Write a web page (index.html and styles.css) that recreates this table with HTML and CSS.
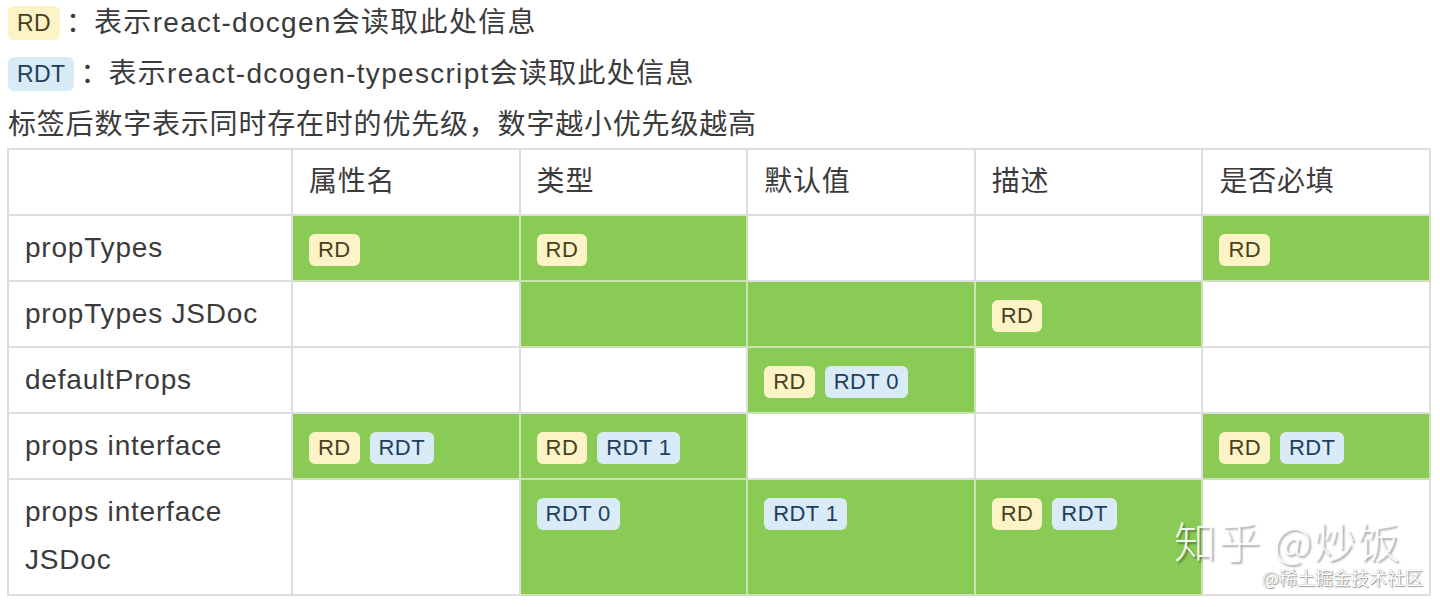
FILE: index.html
```html
<!DOCTYPE html>
<html lang="zh">
<head>
<meta charset="utf-8">
<link rel="stylesheet" href="styles.css">
</head>
<body>
<div class="page">
  <div class="legend">
    <div class="legend-line wide"><span class="badge rd big">RD</span><span class="colon">：</span>表示react-docgen会读取此处信息</div>
    <div class="legend-line wide"><span class="badge rdt big">RDT</span><span class="colon">：</span>表示react-dcogen-typescript会读取此处信息</div>
    <div class="legend-line">标签后数字表示同时存在时的优先级，数字越小优先级越高</div>
  </div>
  <div class="table-wrap">
    <table class="grid">
      <colgroup>
        <col class="c0"><col class="c"><col class="c"><col class="c"><col class="c"><col class="c">
      </colgroup>
      <thead>
        <tr><th></th><th>属性名</th><th>类型</th><th>默认值</th><th>描述</th><th>是否必填</th></tr>
      </thead>
      <tbody>
        <tr>
          <td>propTypes</td>
          <td class="on"><span class="badge rd">RD</span></td>
          <td class="on"><span class="badge rd">RD</span></td>
          <td></td>
          <td></td>
          <td class="on"><span class="badge rd">RD</span></td>
        </tr>
        <tr>
          <td>propTypes JSDoc</td>
          <td></td>
          <td class="on"></td>
          <td class="on"></td>
          <td class="on"><span class="badge rd">RD</span></td>
          <td></td>
        </tr>
        <tr>
          <td>defaultProps</td>
          <td></td>
          <td></td>
          <td class="on"><span class="badge rd">RD</span><span class="badge rdt">RDT 0</span></td>
          <td></td>
          <td></td>
        </tr>
        <tr>
          <td>props interface</td>
          <td class="on"><span class="badge rd">RD</span><span class="badge rdt">RDT</span></td>
          <td class="on"><span class="badge rd">RD</span><span class="badge rdt">RDT 1</span></td>
          <td></td>
          <td></td>
          <td class="on"><span class="badge rd">RD</span><span class="badge rdt">RDT</span></td>
        </tr>
        <tr class="tall">
          <td>props interface<br>JSDoc</td>
          <td></td>
          <td class="on"><span class="badge rdt">RDT 0</span></td>
          <td class="on"><span class="badge rdt">RDT 1</span></td>
          <td class="on"><span class="badge rd">RD</span><span class="badge rdt">RDT</span></td>
          <td></td>
        </tr>
      </tbody>
    </table>
    <div class="watermark">
      <div class="wm-main">知乎 @炒饭</div>
      <div class="wm-sub">@稀土掘金技术社区</div>
    </div>
  </div>
</div>
</body>
</html>
```

FILE: styles.css
```css
html, body {
  margin: 0;
  padding: 0;
  background: #ffffff;
}

body {
  width: 1440px;
  height: 607px;
  overflow: hidden;
  font-family: "Liberation Sans", "Noto Sans CJK SC", sans-serif;
  color: #3b3b3b;
}

.page {
  padding-left: 7px;
}

.legend {
  margin-top: -3px;
  padding-left: 1px;
}

.legend-line {
  height: 51px;
  line-height: 51px;
  font-size: 28px;
  letter-spacing: 0.8px;
  display: flex;
  align-items: center;
  white-space: nowrap;
}

.legend-line.wide {
  letter-spacing: 1.3px;
}

.colon {
  margin: 0 0 0 6px;
  letter-spacing: 0;
}

.badge {
  display: inline-block;
  height: 32px;
  line-height: 32px;
  padding: 0 9px;
  border-radius: 6px;
  font-size: 22px;
  letter-spacing: 0.4px;
  vertical-align: middle;
  margin-right: 10px;
}

.badge.big {
  height: 34px;
  line-height: 34px;
  font-size: 23px;
  margin-right: 0;
  padding: 0 9px;
}

.rd {
  background: #fcf4c6;
  color: #4a401e;
}

.rdt {
  background: #d8ebf7;
  color: #223d5e;
}

.table-wrap {
  position: relative;
  margin-top: -2px;
  width: 1424px;
}

.grid {
  border-collapse: collapse;
  table-layout: fixed;
  width: 1424px;
  border: 2px solid #dedede;
}

.c0 {
  width: 284px;
}

.grid th,
.grid td {
  border: 2px solid #dedede;
  padding: 8px 16px 8px 16px;
  line-height: 48px;
  font-size: 28px;
  letter-spacing: 0.8px;
  font-weight: normal;
  text-align: left;
  vertical-align: top;
  color: #3b3b3b;
  white-space: nowrap;
}

.grid tr.tall td {
  padding-bottom: 10px;
}

.grid td.on {
  background: #8acb55;
  border-color: #c9e3b3;
}

.watermark {
  position: absolute;
  left: 1167px;
  top: 370px;
  pointer-events: none;
}

.wm-main {
  font-family: "Noto Sans CJK SC", sans-serif;
  font-weight: 300;
  font-size: 42px;
  line-height: 44px;
  letter-spacing: 2px;
  color: rgba(255, 255, 255, 0.92);
  text-shadow: 2px 2px 2px rgba(0, 0, 0, 0.35);
  white-space: nowrap;
}

.wm-sub {
  font-family: "Noto Sans CJK SC", sans-serif;
  font-size: 18px;
  line-height: 22px;
  margin-left: 88px;
  margin-top: 4px;
  color: #ffffff;
  text-shadow: 0 0 1px #8a8a8a, 1px 1px 1px #9a9a9a;
  white-space: nowrap;
}
```
